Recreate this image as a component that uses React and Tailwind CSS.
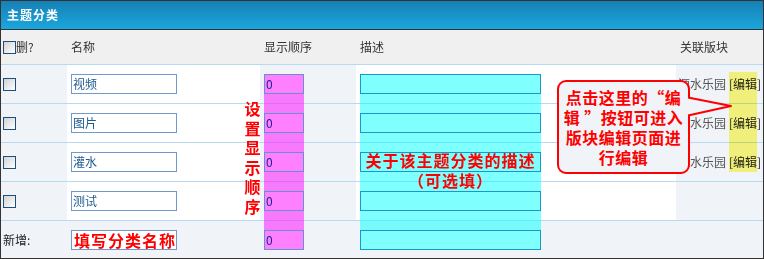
const Box = () => (
  <div className="w-[13px] h-[13px] shrink-0 border border-[#1c4f7c] bg-linear-to-br from-[#d2d2d2] to-white" />
);

const rows = [
  { name: "视频", linked: true },
  { name: "图片", linked: true },
  { name: "灌水", linked: true },
  { name: "测试", linked: false },
];

export default function App() {
  return (
    <div
      lang="zh-CN"
      className="relative w-[764px] h-[259px] overflow-hidden border border-[#333] bg-white font-['Noto_Sans_CJK_SC','Noto_Sans',sans-serif] text-[12px] text-[#333]"
    >
      {/* title bar */}
      <div className="flex h-[29px] items-center border-b border-[#333] bg-linear-to-b from-[#1780b5] to-[#1aa7de] pl-[6px] text-[12px] font-bold tracking-[1px] text-white">
        主题分类
      </div>

      {/* header row */}
      <div className="flex h-[35px] items-center border-b border-[#b8daf0] bg-[#f0f0f0] text-[#333]">
        <div className="flex w-[66px] items-center pl-[2px]">
          <Box />
          <span>删?</span>
        </div>
        <div className="w-[193px] pl-[4px]">名称</div>
        <div className="w-[96px] pl-[4px]">显示顺序</div>
        <div className="w-[320px] pl-[4px]">描述</div>
        <div className="w-[87px] pl-[4px]">关联版块</div>
      </div>

      {/* data rows */}
      {rows.map((r) => (
        <div key={r.name} className="flex h-[39px] border-b border-[#b8daf0]">
          <div className="flex w-[66px] items-center bg-[#f0f4f8] pl-[2px]">
            <Box />
          </div>
          <div className="flex w-[193px] items-center bg-white pl-[4px]">
            <div className="relative z-[2] h-[20px] w-[106px] border border-[#6f9acb] bg-white px-[1px] text-[12px] leading-[18px] text-[#1e5a8c]">
              {r.name}
            </div>
          </div>
          <div className="flex w-[96px] items-center bg-[#f0f4f8] pl-[4px]">
            <div className="relative z-[2] h-[20px] w-[40px] border border-[#6a8fcf] bg-[#ff80ff] px-[1px] text-[12px] leading-[18px] text-[#20209c]">
              0
            </div>
          </div>
          <div className="flex w-[320px] items-center bg-white pl-[4px]">
            <div className="relative z-[2] h-[20px] w-[181px] border border-[#1898c8] bg-[#80ffff]" />
          </div>
          <div className="flex w-[87px] items-center whitespace-nowrap bg-[#f0f4f8] pl-[2px]">
            {r.linked && (
              <>
                <span className="text-[#555]">源水乐园</span>
                <span className="ml-[3px] text-[#222]">[编辑]</span>
              </>
            )}
          </div>
        </div>
      ))}

      {/* new row */}
      <div className="flex h-[37px] bg-[#f0f4f8]">
        <div className="flex w-[66px] items-center pl-[2px] text-[#222]">新增:</div>
        <div className="flex w-[193px] items-center pl-[4px]">
          <div className="relative z-[2] h-[20px] w-[106px] border border-[#6f9acb] bg-white pl-[2px] text-[16px] font-bold leading-[18px] tracking-[1px] text-[#ff0000] whitespace-nowrap">
            填写分类名称
          </div>
        </div>
        <div className="flex w-[96px] items-center pl-[4px]">
          <div className="relative z-[2] h-[20px] w-[40px] border border-[#6a8fcf] bg-[#ff80ff] px-[1px] text-[12px] leading-[18px] text-[#20209c]">
            0
          </div>
        </div>
        <div className="flex w-[320px] items-center pl-[4px]">
          <div className="relative z-[2] h-[20px] w-[181px] border border-[#1898c8] bg-[#80ffff]" />
        </div>
        <div className="w-[87px]" />
      </div>

      {/* annotation overlays */}
      <div className="absolute left-[263px] top-[73px] z-[1] h-[175px] w-[40px] bg-[#ff00ff]/50" />
      <div className="absolute left-[359px] top-[73px] z-[1] h-[175px] w-[181px] bg-[#00ffff]/50" />
      <div className="absolute left-[728px] top-[71px] z-[3] h-[100px] w-[28px] bg-[#fffa80] mix-blend-multiply" />

      <div className="absolute left-[243px] top-[98px] z-[3] w-[17px] text-center text-[16px] font-bold leading-[19.5px] text-[#ff0000]">
        设<br />置<br />显<br />示<br />顺<br />序
      </div>

      <div className="absolute left-[359px] top-[149px] z-[3] w-[181px] text-center text-[16px] font-bold leading-[20px] tracking-[1px] text-[#ff0000] whitespace-nowrap">
        关于该主题分类的描述
        <br />
        （可选填）
      </div>

      {/* callout */}
      <div className="absolute left-[556px] top-[79px] z-[4] h-[94px] w-[133px] rounded-[9px] border-2 border-[#ff0000] bg-[#f0f4f8] pt-[5px] text-center text-[16px] font-bold leading-[20px] tracking-[0.5px] text-[#ff0000] whitespace-nowrap">
        点击这里的“编
        <br />
        辑 ”按钮可进入
        <br />
        版块编辑页面进
        <br />
        行编辑
      </div>
      <svg
        className="absolute left-[684px] top-[93px] z-[5]"
        width="48"
        height="26"
        viewBox="0 0 48 26"
      >
        <polygon points="0,3 46,12 0,22" fill="#f0f4f8" />
        <polyline points="3,3.5 46,12 3,21.5" fill="none" stroke="#ff0000" strokeWidth="2" strokeLinejoin="round" />
      </svg>
    </div>
  );
}
